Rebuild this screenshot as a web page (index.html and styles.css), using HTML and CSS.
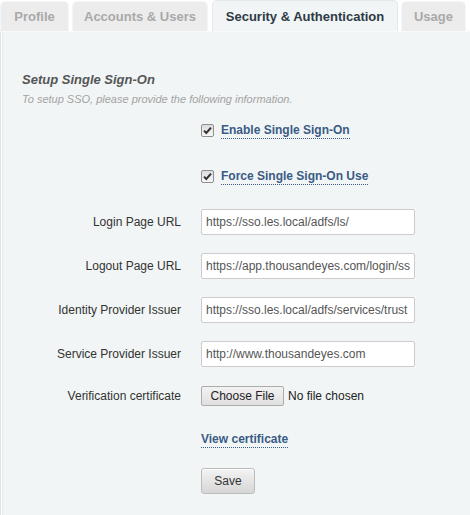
FILE: index.html
```html
<!DOCTYPE html>
<html>
<head>
<meta charset="utf-8">
<link rel="stylesheet" href="styles.css">
</head>
<body>
<div class="tabs">
  <div class="tab">Profile</div>
  <div class="tab tab-accounts">Accounts &amp; Users</div>
  <div class="tab tab-active">Security &amp; Authentication</div>
  <div class="tab tab-usage">Usage</div>
</div>
<div class="panel">
  <h2 class="title">Setup Single Sign-On</h2>
  <p class="subtitle">To setup SSO, please provide the following information.</p>
  <div class="form">
    <div class="row row-check first-check">
      <div class="label"></div>
      <div class="control">
        <span class="checkbox"><svg width="9" height="9" viewBox="0 0 9 9"><path d="M1 4.6 L3.3 7 L8 1.6" fill="none" stroke="#333" stroke-width="2"/></svg></span>
        <span class="link">Enable Single Sign-On</span>
      </div>
    </div>
    <div class="row row-check second-check">
      <div class="label"></div>
      <div class="control">
        <span class="checkbox"><svg width="9" height="9" viewBox="0 0 9 9"><path d="M1 4.6 L3.3 7 L8 1.6" fill="none" stroke="#333" stroke-width="2"/></svg></span>
        <span class="link">Force Single Sign-On Use</span>
      </div>
    </div>
    <div class="row row-input first-input">
      <div class="label">Login Page URL</div>
      <div class="control"><input class="text" type="text" value="https://sso.les.local/adfs/ls/"></div>
    </div>
    <div class="row row-input">
      <div class="label">Logout Page URL</div>
      <div class="control"><input class="text" type="text" value="https://app.thousandeyes.com/login/sso"></div>
    </div>
    <div class="row row-input">
      <div class="label">Identity Provider Issuer</div>
      <div class="control"><input class="text" type="text" value="https://sso.les.local/adfs/services/trust"></div>
    </div>
    <div class="row row-input">
      <div class="label">Service Provider Issuer</div>
      <div class="control"><input class="text" type="text" value="http://www.thousandeyes.com"></div>
    </div>
    <div class="row row-file">
      <div class="label">Verification certificate</div>
      <div class="control"><button class="file-btn" type="button">Choose File</button><span class="file-name">No file chosen</span></div>
    </div>
    <div class="row row-view">
      <div class="label"></div>
      <div class="control"><span class="link">View certificate</span></div>
    </div>
    <div class="row row-save">
      <div class="label"></div>
      <div class="control"><button class="save-btn" type="button">Save</button></div>
    </div>
  </div>
</div>
</body>
</html>
```
FILE: styles.css
```css
html, body {
  margin: 0;
  padding: 0;
  background: #ffffff;
  font-family: "Liberation Sans", Arial, sans-serif;
  height: 100%;
  overflow: hidden;
}

.tabs {
  display: flex;
  height: 31px;
  align-items: stretch;
}

.tab {
  box-sizing: border-box;
  width: 69px;
  margin-right: 3px;
  margin-top: 1px;
  background: #ececec;
  border: 1px solid #f6f6f6;
  border-bottom: none;
  border-radius: 5px 5px 0 0;
  color: #a9a9a9;
  font-weight: bold;
  font-size: 13px;
  line-height: 30px;
  text-align: center;
}

.tab-accounts {
  width: 136px;
  margin-right: 4px;
}

.tab-active {
  width: 186px;
  margin-top: 0;
  background: #f1f5f5;
  border: 1px solid #e3e8e8;
  border-bottom: none;
  color: #2e3a46;
  line-height: 31px;
}

.tab-usage {
  width: 65px;
}

.panel {
  box-sizing: border-box;
  height: 484px;
  background: #f1f5f5;
  border-left: 1px solid #dfe4e4;
  border-top: 1px solid #f8fafa;
  box-shadow: inset 1px 0 0 #ffffff, inset 2px 0 0 #e6ebeb;
  padding: 40px 0 0 21px;
}

.title {
  margin: 0;
  font-size: 13px;
  line-height: 16px;
  font-weight: bold;
  font-style: italic;
  color: #555555;
}

.subtitle {
  margin: 4px 0 0;
  font-size: 11px;
  line-height: 14px;
  font-style: italic;
  color: #a3a3a3;
}

.form {
  display: flex;
  flex-direction: column;
}

.row {
  display: flex;
  align-items: center;
}

.label {
  width: 159px;
  flex: none;
  text-align: right;
  font-size: 12px;
  color: #333333;
  margin-right: 20px;
}

.control {
  display: flex;
  align-items: center;
}

.row-check {
  height: 20px;
}

.first-check {
  margin-top: 14px;
}

.second-check {
  margin-top: 26px;
}

.checkbox {
  box-sizing: border-box;
  width: 13px;
  height: 13px;
  border: 1px solid #8e8f8f;
  border-radius: 2px;
  background: linear-gradient(#dcdcdc, #f7f7f7);
  display: flex;
  align-items: center;
  justify-content: center;
  margin-right: 7px;
}

.link {
  font-size: 12px;
  font-weight: bold;
  color: #3a5b85;
  line-height: 16px;
  border-bottom: 1px dotted #3a5b85;
}

.row-input {
  height: 26px;
  margin-top: 18px;
}

.first-input {
  margin-top: 23px;
}

.text {
  box-sizing: border-box;
  width: 214px;
  height: 26px;
  margin: 0;
  border: 1px solid #cccccc;
  border-radius: 2px;
  background: #ffffff;
  padding: 0 4px;
  font-family: "Liberation Sans", Arial, sans-serif;
  font-size: 12px;
  color: #555555;
  outline: none;
}

.row-file {
  height: 26px;
  margin-top: 16px;
}

.file-btn {
  box-sizing: border-box;
  height: 20px;
  width: 83px;
  margin: 0;
  padding: 0;
  border: 1px solid #acacac;
  border-radius: 2px;
  background: linear-gradient(#f2f2f2, #e0e0e0);
  font-family: "Liberation Sans", Arial, sans-serif;
  font-size: 12px;
  color: #222222;
}

.file-name {
  font-size: 12px;
  color: #222222;
  margin-left: 4px;
}

.row-view {
  margin-top: 22px;
}

.row-save {
  margin-top: 20px;
}

.save-btn {
  box-sizing: border-box;
  width: 54px;
  height: 26px;
  margin: 0;
  padding: 0;
  border: 1px solid #bcbcbc;
  border-radius: 3px;
  background: linear-gradient(#f3f3f3, #d6d6d6);
  box-shadow: inset 0 1px 0 #ffffff;
  font-family: "Liberation Sans", Arial, sans-serif;
  font-size: 12px;
  color: #333333;
}
```
